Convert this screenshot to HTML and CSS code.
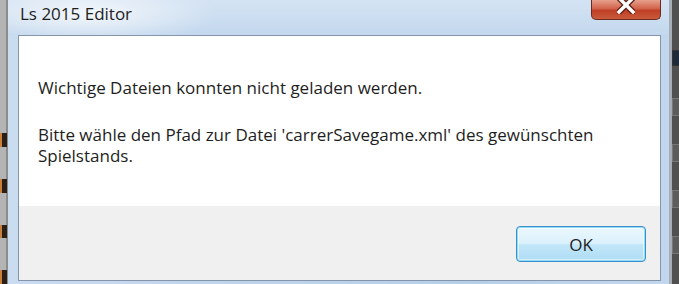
FILE: index.html
```html
<!DOCTYPE html>
<html lang="de">
<head>
    <meta charset="UTF-8">
    <title>Ls 2015 Editor</title>
    <link rel="stylesheet" href="styles.css">
</head>
<body>
    <div class="desktop">
        <!-- Background behind the dialog, left side -->
        <div class="edge edge-left">
            <span class="mark"></span>
            <span class="mark"></span>
            <span class="mark"></span>
            <span class="mark"></span>
        </div>

        <!-- Dialog window -->
        <div class="window">
            <div class="titlebar">
                <span class="title">Ls 2015 Editor</span>
                <div class="close-btn">
                    <svg width="18" height="14" viewBox="0 0 18 14">
                        <path d="M2 -2 L16 12 M16 -2 L2 12" stroke="#5a1e14" stroke-width="6" stroke-linecap="square"/>
                        <path d="M2 -2 L16 12 M16 -2 L2 12" stroke="#fff" stroke-width="3.4" stroke-linecap="square"/>
                    </svg>
                </div>
            </div>

            <div class="client">
                <div class="message">
                    <p>Wichtige Dateien konnten nicht geladen werden.</p>
                    <p>Bitte wähle den Pfad zur Datei 'carrerSavegame.xml' des gewünschten Spielstands.</p>
                </div>
                <div class="footer">
                    <button class="ok-btn">OK</button>
                </div>
            </div>
        </div>

        <!-- Background behind the dialog, right side -->
        <div class="edge edge-right">
            <span class="tile tile-dark"></span>
            <span class="tile"></span>
            <span class="tile"></span>
            <span class="tile"></span>
            <span class="tile"></span>
        </div>
    </div>
</body>
</html>
```

FILE: styles.css
```css
/* General */
body {
    margin: 0;
    font-family: 'Open Sans', 'Noto Sans', sans-serif;
    color: #1e1e1e;
    overflow: hidden;
}

.desktop {
    display: flex;
    width: 679px;
    height: 284px;
    background: #9a9a9a;
}

/* Desktop edges */
.edge {
    display: flex;
    flex-direction: column;
    box-sizing: border-box;
}

.edge-left {
    width: 8px;
    background: #b4b4b4;
    border-right: 2px solid #8c8c8c;
    padding-top: 133px;
    gap: 32px;
}

.edge-left .mark {
    display: block;
    width: 5px;
    height: 14px;
    background: #2a2016;
    border-left: 2px solid #c8803a;
}

.edge-right {
    width: 10px;
    background: #505050;
    border-left: 3px solid #a7adb4;
    padding-top: 50px;
    gap: 28px;
}

.edge-right .tile {
    display: block;
    width: 6px;
    height: 16px;
    border: 1px solid #777;
    background: #5c5c5c;
}

.edge-right .tile-dark {
    background: #1d2a3a;
    border-color: #333;
    height: 14px;
    margin-bottom: 4px;
}

/* Window frame */
.window {
    width: 661px;
    height: 284px;
    display: flex;
    flex-direction: column;
    box-sizing: border-box;
    padding: 0 8px 3px 10px;
    background: linear-gradient(to right, #c9dcf0 0%, #bcd3eb 40%, #b6cfe9 70%, #c2d7ee 100%);
}

.titlebar {
    height: 35px;
    display: flex;
    justify-content: space-between;
    align-items: flex-start;
    margin: 0 -8px 0 -10px;
    padding: 0 8px 0 12px;
    background:
        radial-gradient(ellipse 130px 30px at 80px 14px, rgba(255, 255, 255, 0.75), rgba(255, 255, 255, 0) 100%),
        linear-gradient(to bottom, #d4e3f3, #c3d8ee);
}

.title {
    font-size: 17px;
    line-height: 26px;
    padding-top: 1px;
}

.close-btn {
    width: 70px;
    height: 20px;
    box-sizing: border-box;
    border: 1px solid #6b2a20;
    border-top: none;
    border-radius: 0 0 5px 5px;
    background: linear-gradient(to bottom, #e6a08c 0%, #d2634b 45%, #bf3f27 55%, #c95b3b 100%);
    display: flex;
    justify-content: center;
    align-items: flex-start;
}

/* Client area */
.client {
    flex: 1;
    display: flex;
    flex-direction: column;
    border: 1px solid #8594a8;
    background: #fff;
}

.message {
    height: 170px;
    box-sizing: border-box;
    padding: 41px 20px 0 19px;
    font-size: 17px;
    line-height: 21px;
}

.message p {
    margin: 0 0 26px;
}

.footer {
    flex: 1;
    background: #f0f0f0;
    display: flex;
    justify-content: flex-end;
    align-items: flex-start;
    padding: 20px 14px 0 0;
}

.ok-btn {
    width: 130px;
    height: 36px;
    font-family: inherit;
    font-size: 17px;
    color: #1e1e1e;
    border: 1px solid #3c8fc9;
    border-radius: 4px;
    box-shadow: inset 0 0 0 1px #8fdcf6, inset 0 0 0 2px rgba(255, 255, 255, 0.5);
    background: linear-gradient(to bottom, #ecf7fd 0%, #dbf1fc 48%, #c2e6f9 52%, #aedcf5 100%);
    padding: 0;
}
```
